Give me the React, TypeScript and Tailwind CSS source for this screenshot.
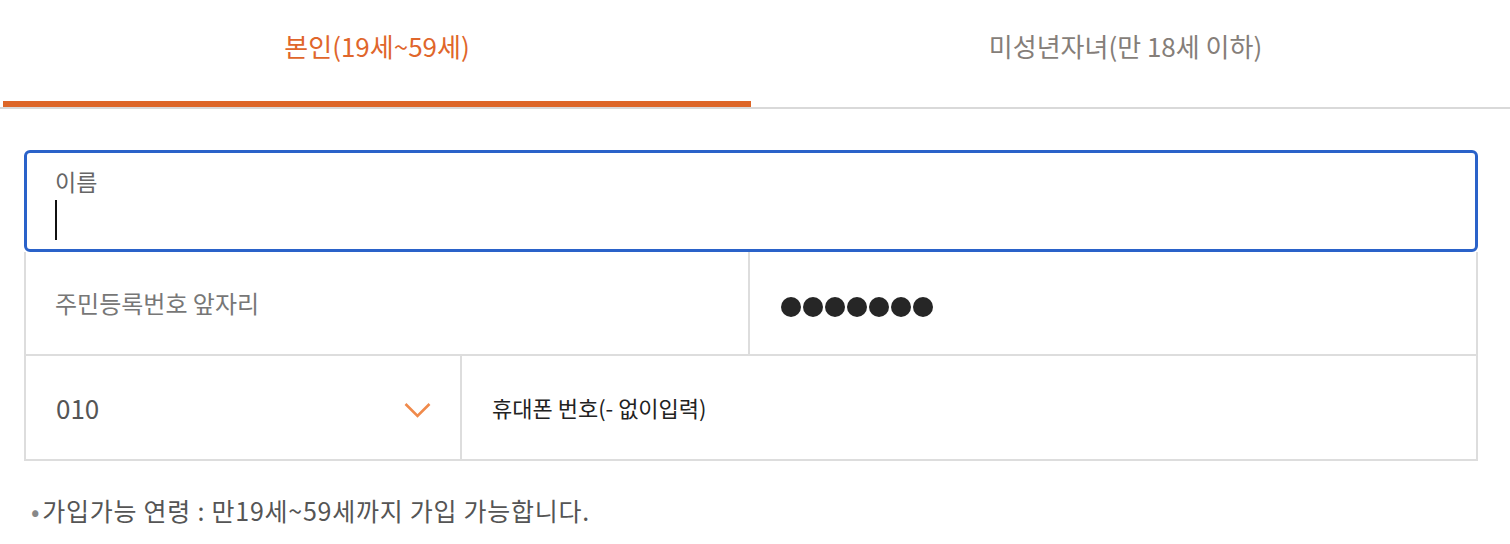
const font = { fontFamily: '"Noto Sans CJK KR", "Noto Sans", sans-serif' }

function Tabs() {
  return (
    <div className="flex border-b-2 border-[#d9d9d9]">
      <button className="ml-[3px] w-[748px] h-[107px] border-b-[6px] border-[#dd6628] flex items-center justify-center pb-[10px] text-[26px] text-[#e0662b]">
        본인(19세~59세)
      </button>
      <button className="flex-1 h-[107px] flex items-center justify-center pb-[16px] pr-[10px] text-[26px] text-[#857e79]">
        미성년자녀(만 18세 이하)
      </button>
    </div>
  )
}

function Dots({ count }: { count: number }) {
  return (
    <div className="flex gap-[2px]">
      {Array.from({ length: count }).map((_, i) => (
        <span key={i} className="w-[20px] h-[20px] rounded-full bg-[#262626]" />
      ))}
    </div>
  )
}

function Chevron() {
  return (
    <svg width="27" height="16" viewBox="0 0 27 16" fill="none">
      <polyline points="1.5,2 13.5,14 25.5,2" stroke="#f08a4b" strokeWidth="2.6" />
    </svg>
  )
}

export default function App() {
  return (
    <div className="bg-white w-[1510px] h-[544px]" style={font}>
      <Tabs />

      <div className="pl-[24px] pr-[32px] pt-[41px]">
        <div className="h-[102px] rounded-[6px] border-[3px] border-[#2a62c9] px-[28px] pt-[15px]">
          <div className="text-[23px] leading-[26px] text-[#666]">이름</div>
          <div className="mt-[6px] w-[2px] h-[40px] bg-[#111]" />
        </div>

        <div className="flex h-[104px] border-x-2 border-b-2 border-[#dddddd]">
          <div className="w-[724px] border-r-2 border-[#dddddd] flex items-center pl-[29px] text-[24px] text-[#777]">
            주민등록번호 앞자리
          </div>
          <div className="flex-1 flex items-center pl-[31px] pt-[8px]">
            <Dots count={7} />
          </div>
        </div>

        <div className="flex h-[105px] border-x-2 border-b-2 border-[#dddddd]">
          <div className="w-[436px] border-r-2 border-[#dddddd] flex items-center justify-between pl-[30px] pr-[29px]">
            <span className="text-[26px] text-[#555]">010</span>
            <span className="pt-[4px]">
              <Chevron />
            </span>
          </div>
          <div className="flex-1 flex items-center pl-[30px] text-[22px] text-[#222]">
            휴대폰 번호(- 없이입력)
          </div>
        </div>

        <p className="mt-[31px] ml-[7px] text-[25px] tracking-[0.75px] text-[#555]">
          <span className="text-[#888] mr-[2px]">•</span>가입가능 연령 : 만19세~59세까지 가입 가능합니다.
        </p>
      </div>
    </div>
  )
}
